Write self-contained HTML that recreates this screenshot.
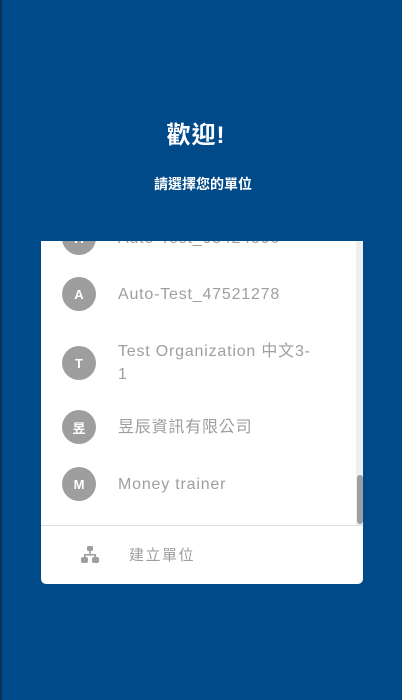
<!DOCTYPE html>
<html><head><meta charset="utf-8"><style>
*{margin:0;padding:0;box-sizing:border-box}
body{width:402px;height:700px;background:#014a8a;font-family:"Liberation Sans","Noto Sans CJK TC",sans-serif;position:relative;overflow:hidden}
.edge{position:absolute;left:0;top:0;width:2px;height:700px;background:#0b2f55}
h1{position:absolute;top:115px;left:0;width:392px;text-align:center;color:#fff;font-size:24px;font-weight:bold;letter-spacing:1px}
.sub{position:absolute;top:174px;left:0;width:406px;text-align:center;color:#fff;font-size:14px;font-weight:bold}
.card{position:absolute;left:41px;top:241px;width:322px;height:343px;background:#fff;border-radius:0 0 5px 5px;overflow:hidden}
.list{position:absolute;left:0;top:0;width:322px;height:284px;overflow:hidden}
.track{position:absolute;right:0;top:0;width:7px;height:284px;background:#efefef}
.thumb{position:absolute;right:0;top:234px;width:6px;height:49px;background:#9e9e9e;border-radius:3px}
.item{position:absolute;left:21px;display:flex;align-items:center}
.av{width:34px;height:34px;border-radius:50%;background:#9e9e9e;color:#fff;font-size:13px;font-weight:bold;display:flex;align-items:center;justify-content:center;flex:none}
.t{margin-left:22px;color:#9e9e9e;font-size:16px;line-height:23px;width:220px;letter-spacing:0.8px;white-space:nowrap}
.div{position:absolute;left:0;top:284px;width:322px;height:1px;background:#ddd}
.foot{position:absolute;left:88px;top:303px;color:#9e9e9e;font-size:15px;letter-spacing:1.5px}
</style></head><body>
<div class="edge"></div>
<h1>歡迎!</h1>
<div class="sub">請選擇您的單位</div>
<div class="card">
<div class="list">
<div class="item" style="top:-20px"><div class="av">A</div><div class="t">Auto-Test_03424806</div></div>
<div class="item" style="top:36px"><div class="av">A</div><div class="t">Auto-Test_47521278</div></div>
<div class="item" style="top:99px"><div class="av">T</div><div class="t">Test Organization 中文3-<br>1</div></div>
<div class="item" style="top:169px"><div class="av">昱</div><div class="t">昱辰資訊有限公司</div></div>
<div class="item" style="top:226px"><div class="av">M</div><div class="t">Money trainer</div></div>
<div class="track"></div><div class="thumb"></div>
</div>
<div class="div"></div>
<svg style="position:absolute;left:40px;top:305px" width="18" height="18" viewBox="0 0 18 18" fill="#9e9e9e"><rect x="6" y="0" width="6" height="5" rx="1.5"/><rect x="8.2" y="5" width="1.6" height="4"/><rect x="3" y="8" width="12" height="1.6"/><rect x="3" y="8" width="1.6" height="3"/><rect x="13.4" y="8" width="1.6" height="3"/><rect x="0" y="11" width="7" height="6" rx="2"/><rect x="11" y="11" width="7" height="6" rx="2"/></svg>
<div class="foot">建立單位</div>
</div>
</body></html>
